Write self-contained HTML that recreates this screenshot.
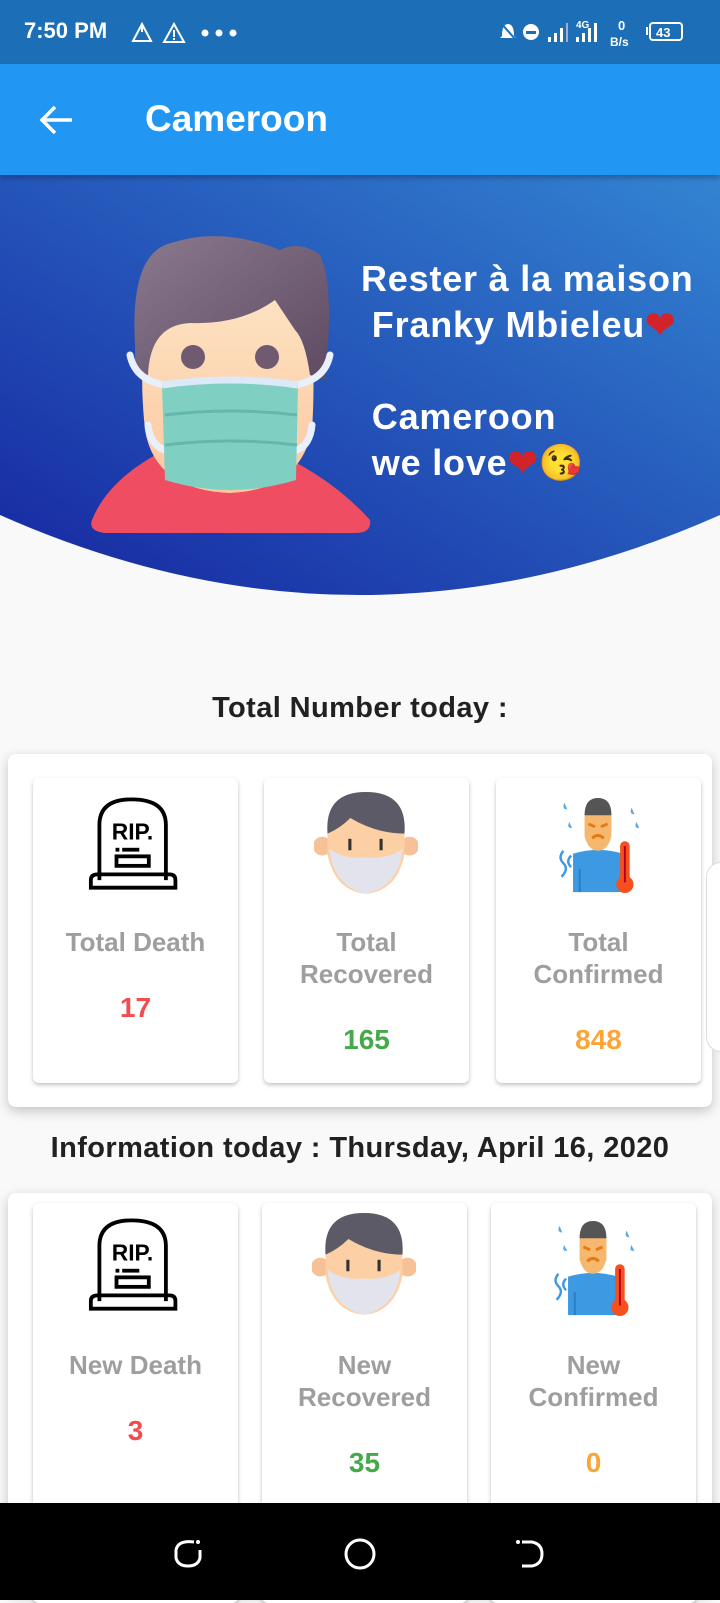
<!DOCTYPE html>
<html><head><meta charset="utf-8">
<style>
*{margin:0;padding:0;box-sizing:border-box}
body{width:720px;height:1600px;overflow:hidden;background:#f9f9f9;font-family:"Liberation Sans",sans-serif;position:relative}
.abs{position:absolute}
.status{left:0;top:0;width:720px;height:64px;background:#1c6fb6;color:#fff}
.appbar{left:0;top:64px;width:720px;height:111px;background:#2196f3;box-shadow:0 3px 5px rgba(0,0,0,.25);z-index:2}
.outer{left:8px;width:704px;background:#fff;border-radius:8px;box-shadow:0 4px 12px rgba(0,0,0,.22)}
.card{width:205px;background:#fff;border-radius:6px;box-shadow:0 2px 4px rgba(0,0,0,.25);text-align:center}
.lbl{position:absolute;left:0;width:100%;color:#9e9e9e;font-weight:bold;font-size:26px;line-height:32px}
.num{position:absolute;left:0;width:100%;font-weight:bold;font-size:28px}
.hero-t{color:#fff;font-size:36px;line-height:46px;font-weight:bold;letter-spacing:0.8px}
h2{position:absolute;left:0;width:720px;text-align:center;font-size:29px;color:#212121;letter-spacing:0.4px}
</style></head><body>
<div class="abs status">
 <div class="abs" style="left:24px;top:18px;font-size:22px;font-weight:bold">7:50 PM</div>
 <svg class="abs" style="left:130px;top:22px" width="110" height="22"><path d="M12 2 L3 19 H21 Z M12 2 L12 10" fill="none" stroke="#fff" stroke-width="2"/><path d="M44 2 L34 20 H54 Z" fill="none" stroke="#fff" stroke-width="2"/><rect x="43" y="8" width="2" height="7" fill="#fff"/><rect x="43" y="16" width="2" height="2" fill="#fff"/><circle cx="75" cy="11" r="3.5" fill="#fff"/><circle cx="89" cy="11" r="3.5" fill="#fff"/><circle cx="103" cy="11" r="3.5" fill="#fff"/></svg>
 <svg class="abs" style="left:498px;top:16px" width="200" height="34"><path d="M4 20 Q4 8 10 8 Q16 8 16 20 L18 22 H2 Z" fill="#fff"/><line x1="2" y1="6" x2="18" y2="24" stroke="#1c6fb6" stroke-width="2"/><circle cx="33" cy="16" r="8" fill="#fff"/><rect x="28" y="15" width="10" height="3" fill="#1c6fb6"/><rect x="50" y="21" width="3" height="5" fill="#fff"/><rect x="56" y="17" width="3" height="9" fill="#fff"/><rect x="62" y="12" width="3" height="14" fill="#fff"/><rect x="68" y="7" width="2" height="19" fill="#aac"/><text x="78" y="12" font-size="10" fill="#fff" font-weight="bold">4G</text><rect x="78" y="21" width="3" height="5" fill="#fff"/><rect x="84" y="17" width="3" height="9" fill="#fff"/><rect x="90" y="12" width="3" height="14" fill="#fff"/><rect x="96" y="7" width="3" height="19" fill="#fff"/><text x="120" y="14" font-size="13" fill="#fff" font-weight="bold">0</text><text x="112" y="30" font-size="12" fill="#fff" font-weight="bold">B/s</text><rect x="148" y="11" width="2" height="8" fill="#fff"/><rect x="152" y="7" width="32" height="17" rx="3" fill="none" stroke="#fff" stroke-width="2"/><text x="158" y="21" font-size="13" fill="#fff" font-weight="bold">43</text></svg>
</div>
<div class="abs appbar">
 <svg class="abs" style="left:38px;top:40px" width="36" height="32"><path d="M34 16 H4 M17 3 L4 16 L17 29" fill="none" stroke="#fff" stroke-width="3.5"/></svg>
 <div class="abs" style="left:145px;top:34px;font-size:37px;color:#fff;font-weight:bold;letter-spacing:0px">Cameroon</div>
</div>
<svg class="abs" style="left:0;top:175px" width="720" height="425">
 <defs><linearGradient id="g" x1="0" y1="1" x2="1" y2="0"><stop offset="0" stop-color="#1626a0"/><stop offset="1" stop-color="#3384d2"/></linearGradient>
 <linearGradient id="sk" x1="0" y1="0" x2="0" y2="1"><stop offset="0" stop-color="#fde4c4"/><stop offset="1" stop-color="#fdc7a0"/></linearGradient>
 <linearGradient id="hr" x1="0" y1="0" x2="1" y2="1"><stop offset="0" stop-color="#8a7a8e"/><stop offset="1" stop-color="#5e4a62"/></linearGradient></defs>
 <path d="M0 0 H720 V340 Q360 500 0 340 Z" fill="url(#g)"/>
 <path d="M92 345 Q110 300 175 270 L260 270 Q330 300 370 345 Q372 358 355 358 L105 358 Q88 356 92 345 Z" fill="#ef4d62"/>
 <path d="M145 255 Q135 160 160 110 L300 110 Q318 160 312 255 Q300 315 230 318 Q155 315 145 255 Z" fill="url(#sk)"/>
 <path d="M135 170 Q130 85 165 70 Q220 50 280 75 Q300 65 320 80 Q335 110 325 205 L310 200 Q305 165 295 155 Q285 140 275 125 Q240 150 190 148 Q150 150 148 200 L135 200 Z" fill="url(#hr)"/>
 <ellipse cx="193" cy="182" rx="12" ry="12" fill="#6f5a6f"/><ellipse cx="267" cy="182" rx="12" ry="12" fill="#6f5a6f"/>
 <path d="M130 180 Q135 205 165 210 M330 180 Q325 205 295 210 M148 250 Q150 270 165 275 M312 250 Q310 270 297 275" stroke="#e8f1fb" stroke-width="7" fill="none" stroke-linecap="round"/>
 <path d="M162 210 Q230 200 298 210 L296 305 Q230 325 165 305 Z" fill="#7fd0c3"/>
 <path d="M162 210 Q230 200 298 210" stroke="#dbe9f8" stroke-width="7" fill="none"/>
 <path d="M165 240 Q230 232 297 240 M165 270 Q230 262 297 270" stroke="#63b8ab" stroke-width="3" fill="none"/>
</svg>
<div class="abs hero-t" style="left:361px;top:256px">Rester à la maison<br>&nbsp;Franky Mbieleu<span style="color:#d2232a">❤</span><br><br>&nbsp;Cameroon<br>&nbsp;we love<span style="color:#d2232a">❤</span>😘</div>

<h2 style="top:692px">Total Number today :</h2>
<div class="abs outer" style="top:754px;height:353px"></div>
<div class="abs" style="left:706px;top:862px;width:30px;height:190px;border:1px solid #ddd;border-radius:16px;background:#fff"></div>

<svg width="0" height="0" style="position:absolute"><defs>
<symbol id="rip" viewBox="0 0 100 100"><path d="M12 88 V30 Q12 3 46 3 Q82 3 82 30 V88" fill="none" stroke="#000" stroke-width="4"/><path d="M3 88 Q3 82 10 82 H86 Q92 82 92 88 V96 H3 Z" fill="none" stroke="#000" stroke-width="4"/><text x="25" y="45" font-size="24" font-weight="bold" font-family="Liberation Sans">RIP.</text><rect x="36" y="54" width="18" height="4"/><rect x="29" y="54" width="4" height="4"/><rect x="30" y="63" width="34" height="10" fill="none" stroke="#000" stroke-width="4"/></symbol>
<symbol id="rec" viewBox="0 0 100 100"><circle cx="8" cy="52" r="9" fill="#f6c196"/><circle cx="92" cy="52" r="9" fill="#f6c196"/><path d="M13 35 Q13 0 50 0 Q87 0 87 35 V60 Q80 95 50 98 Q20 95 13 60 Z" fill="#fcd0a4"/><path d="M13 40 Q10 0 50 0 Q90 0 87 40 Q60 40 35 25 Q25 35 13 40 Z" fill="#5b5a66"/><rect x="33" y="45" width="3" height="11" fill="#333"/><rect x="63" y="45" width="3" height="11" fill="#333"/><path d="M15 55 Q30 65 50 63 Q70 65 85 55 Q82 90 50 98 Q18 90 15 55 Z" fill="#e3e3ee"/></symbol>
<symbol id="con" viewBox="0 0 100 100"><path d="M24 58 Q50 50 76 58 V98 H24 Z" fill="#3d9ae2"/><rect x="30" y="74" width="2" height="24" fill="#2a7cc4"/><path d="M36 20 Q36 0 50 0 Q64 0 64 20 V40 Q60 55 50 55 Q40 55 36 40 Z" fill="#f6b76e"/><path d="M36 18 Q36 0 50 0 Q64 0 64 18 Z" fill="#555"/><path d="M40 27 L47 30 M60 27 L53 30 M44 42 Q50 36 56 42" stroke="#e57a10" stroke-width="3" fill="none"/><rect x="73" y="45" width="10" height="45" rx="5" fill="#f4511e"/><circle cx="78" cy="90" r="9" fill="#f4511e"/><rect x="77" y="50" width="2" height="38" fill="#b3001b"/><path d="M15 5 Q12 12 18 12 Z M85 10 Q82 17 88 17 Z M90 25 Q87 32 93 31 Z M20 25 Q17 32 23 31 Z" fill="#5aa9e6"/><path d="M14 55 Q8 62 14 68 Q20 74 12 82 M22 60 Q16 66 22 72" stroke="#3d9ae2" stroke-width="2.5" fill="none"/></symbol>
</defs></svg>

<div class="abs card" style="left:33px;top:778px;height:305px"><svg class="abs" style="left:55px;top:16px" width="95" height="100"><use href="#rip"/></svg><div class="lbl" style="top:148px">Total Death</div><div class="num" style="top:214px;color:#f44c4c">17</div></div>
<div class="abs card" style="left:264px;top:778px;height:305px"><svg class="abs" style="left:50px;top:14px" width="104" height="104"><use href="#rec"/></svg><div class="lbl" style="top:148px">Total<br>Recovered</div><div class="num" style="top:246px;color:#45a94a">165</div></div>
<div class="abs card" style="left:496px;top:778px;height:305px"><svg class="abs" style="left:50px;top:20px" width="104" height="96"><use href="#con"/></svg><div class="lbl" style="top:148px">Total<br>Confirmed</div><div class="num" style="top:246px;color:#fba535">848</div></div>

<h2 style="top:1132px">Information today : Thursday, April 16, 2020</h2>
<div class="abs outer" style="top:1193px;height:400px"></div>
<div class="abs card" style="left:33px;top:1203px;height:400px"><svg class="abs" style="left:55px;top:12px" width="95" height="100"><use href="#rip"/></svg><div class="lbl" style="top:146px">New Death</div><div class="num" style="top:212px;color:#f44c4c">3</div></div>
<div class="abs card" style="left:262px;top:1203px;height:400px"><svg class="abs" style="left:50px;top:10px" width="104" height="104"><use href="#rec"/></svg><div class="lbl" style="top:146px">New<br>Recovered</div><div class="num" style="top:244px;color:#45a94a">35</div></div>
<div class="abs card" style="left:491px;top:1203px;height:400px"><svg class="abs" style="left:50px;top:18px" width="104" height="96"><use href="#con"/></svg><div class="lbl" style="top:146px">New<br>Confirmed</div><div class="num" style="top:244px;color:#fba535">0</div></div>

<div class="abs" style="left:0;top:1503px;width:720px;height:97px;background:#000">
 <svg class="abs" style="left:170px;top:33px" width="380" height="34"><path d="M24 6 Q8 4 6 14 V22 Q8 30 18 30 Q28 30 30 22 V14" fill="none" stroke="#fff" stroke-width="3"/><circle cx="28" cy="6" r="2" fill="#fff"/><circle cx="190" cy="18" r="14" fill="none" stroke="#fff" stroke-width="3"/><path d="M352 6 H362 Q372 8 372 18 Q372 28 362 30 H352" fill="none" stroke="#fff" stroke-width="3"/><circle cx="348" cy="6" r="2" fill="#fff"/></svg>
</div>
</body></html>
